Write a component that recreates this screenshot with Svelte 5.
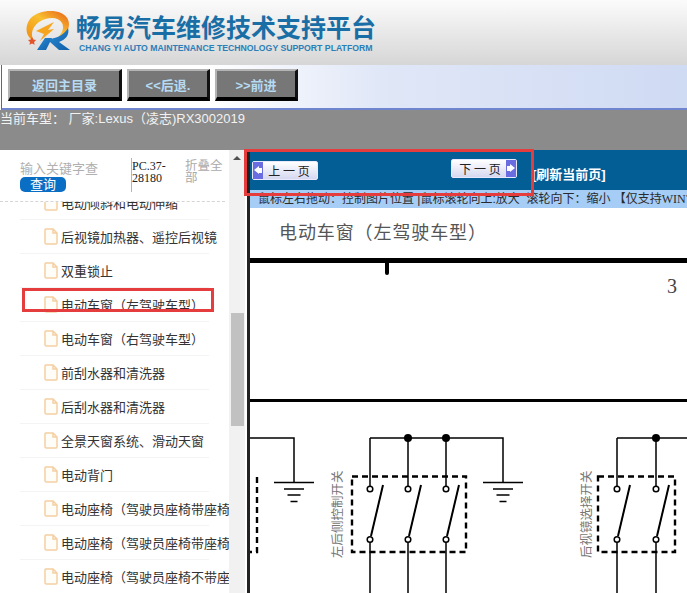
<script>
  const items = [
    '电动倾斜和电动伸缩', '后视镜加热器、遥控后视镜', '双重锁止', '电动车窗（左驾驶车型）',
    '电动车窗（右驾驶车型）', '前刮水器和清洗器', '后刮水器和清洗器', '全景天窗系统、滑动天窗',
    '电动背门', '电动座椅（驾驶员座椅带座椅记忆）', '电动座椅（驾驶员座椅带座椅加热）', '电动座椅（驾驶员座椅不带座椅记忆）'
  ];
  const groups = [
    { xs: [370, 408, 446], box: [352, 476.5, 114, 75.5], dots: [408, 446] },
    { xs: [617, 656], box: [598, 476.5, 77, 75.5], dots: [656] }
  ];
  const grounds = [294, 503];
  const labels = [
    { x: 342, y: 558, t: '左后侧控制开关' },
    { x: 591, y: 558, t: '后视镜选择开关' }
  ];
</script>

<div class="page">
  <header class="brand">
    <svg class="logo" viewBox="0 0 46 41" aria-hidden="true">
      <defs>
        <linearGradient id="sw" x1="0" y1="1" x2="1" y2="0">
          <stop offset="0" stop-color="#f08a10" />
          <stop offset="0.55" stop-color="#f9bf30" />
          <stop offset="1" stop-color="#e65f18" />
        </linearGradient>
        <linearGradient id="rr" x1="0" y1="0" x2="1" y2="1">
          <stop offset="0" stop-color="#2a8bd4" />
          <stop offset="1" stop-color="#0f5ea8" />
        </linearGradient>
      </defs>
      <path d="M9 31 C1 27 -1 17 5 9 C12 1 27 -1 36 3 C45 7 46 16 41 23 C38 27 35 29 30 30 C36 25 40 19 37 13 C33 6 22 7 14 12 C7 17 5 25 9 31Z" fill="url(#sw)" />
      <path d="M11 21 L29 12 L23 20 L29 19 L15 31 L19 24Z" fill="#f7a51f" />
      <path d="M7 27 l1.3 2.6 l2.8 .4 l-2 2 l.5 2.8 l-2.6 -1.3 l-2.5 1.3 l.5 -2.8 l-2 -2 l2.8 -.4Z" fill="#e2542a" />
      <path d="M12 40 L20 28 L27 28 L21 40Z" fill="url(#rr)" />
      <path d="M25 29 C32 28 39 25 43 18 C45 25 40 30 34 32 L45 40 L34 40 L25 32Z" fill="url(#rr)" />
    </svg>
    <div class="brand-text">
      <h1>畅易汽车维修技术支持平台</h1>
      <p>CHANG YI AUTO MAINTENANCE TECHNOLOGY SUPPORT PLATFORM</p>
    </div>
  </header>

  <nav class="toolbar">
    <button class="tool wide">返回主目录</button>
    <button class="tool">&lt;&lt;后退.</button>
    <button class="tool">&gt;&gt;前进</button>
  </nav>

  <div class="vehicle">当前车型： 厂家:Lexus（凌志)RX3002019</div>

  <main class="body">
    <aside class="side">
      <div class="search">
        <div class="kw">
          <span class="ph">输入关键字查</span>
          <span class="query">查询</span>
        </div>
        <div class="code">PC.37-<br />28180</div>
        <div class="fold">折叠全部</div>
      </div>
      <div class="listwrap">
        <ul>
          {#each items as item}
            <li>
              <svg class="doc" viewBox="0 0 14 17" aria-hidden="true">
                <path d="M1.5 1 H9 L13 5 V15 Q13 16 12 16 H2.5 Q1 16 1 15 V2 Q1 1 1.5 1Z M9 1 V5 H13" fill="#fffdf8" stroke="#f5cfa2" stroke-width="1.5" />
              </svg>
              <span>{item}</span>
            </li>
          {/each}
        </ul>
      </div>
    </aside>

    <div class="scroll">
      <span class="up"></span>
      <span class="thumb"></span>
    </div>

    <section class="viewer">
      <div class="bar">
        <button class="page-btn prev"><i class="arr left"></i>上 一 页</button>
        <button class="page-btn next">下 一 页<i class="arr right"></i></button>
        <span class="refresh">[刷新当前页]</span>
      </div>
      <div class="tip">鼠标左右拖动：控制图片位置 |鼠标滚轮向上:放大 &nbsp;滚轮向下：缩小 【仅支持<span class="win">WIN7以上系统】</span></div>
      <svg class="sheet" viewBox="250 208 437 385">
        <text class="title" x="279" y="239">电动车窗（左驾驶车型）</text>
        <rect x="250" y="258" width="437" height="5" fill="#000" />
        <path d="M387 262 V273" stroke="#000" stroke-width="4" stroke-linecap="round" />
        <text class="num" x="667" y="293">3</text>
        <rect x="250" y="399" width="437" height="3" fill="#000" />

        <g fill="none" stroke="#000" stroke-width="1.5">
          <path d="M250 438 H294 V482" />
          <path d="M370 438 H503 V482" />
          <path d="M617 438 H687" />
          <path d="M408 438 V486 M446 438 V486 M370 438 V486 M617 438 V486 M656 438 V486" />
          <path d="M370 542 V593 M408 542 V593 M446 542 V593 M617 542 V593 M656 542 V593" />
          {#each grounds as g}
            <path d="M{g - 20} 482.5 H{g + 20} M{g - 10} 489 H{g + 10} M{g - 6.5} 495 H{g + 6.5} M{g - 3.5} 501.5 H{g + 3.5}" stroke-width="1.6" />
          {/each}
          <path d="M257 477 V552 H250" stroke-width="2.4" stroke-dasharray="6 4" />
          {#each groups as gr}
            <rect x={gr.box[0]} y={gr.box[1]} width={gr.box[2]} height={gr.box[3]} stroke-width="2.4" stroke-dasharray="6 4" />
            {#each gr.xs as x}
              <path d="M{x + 13} 485 L{x + 1} 536" stroke-width="2" />
              <circle cx={x} cy="489" r="2.8" fill="#fff" />
              <circle cx={x} cy="539.5" r="2.8" fill="#fff" />
            {/each}
          {/each}
        </g>
        {#each groups as gr}
          {#each gr.dots as x}
            <circle cx={x} cy="438" r="4" fill="#000" />
          {/each}
        {/each}
        {#each labels as l}
          <text class="vert" transform="translate({l.x} {l.y}) rotate(-90)">{l.t}</text>
        {/each}
      </svg>
    </section>
  </main>

  <div class="mark mark-a"></div>
  <div class="mark mark-b"></div>
</div>

<style>
  :global(body) { margin: 0; }
  .page {
    position: relative;
    width: 687px;
    height: 593px;
    overflow: hidden;
    display: flex;
    flex-direction: column;
    background: #fff;
    font-family: "Liberation Sans", "Noto Sans CJK SC", sans-serif;
  }
  .brand {
    height: 65px;
    flex: none;
    box-sizing: border-box;
    display: flex;
    align-items: flex-start;
    padding: 10px 0 0 25px;
    gap: 5px;
    background: linear-gradient(#fbfbfb, #d6d6d6);
  }
  .logo { width: 46px; height: 41px; flex: none; }
  .brand-text { padding-top: 1px; }
  .brand h1 {
    margin: 0;
    font-size: 25px;
    line-height: 30px;
    font-weight: 700;
    color: #1a6ea6;
    white-space: nowrap;
    font-family: "Noto Sans CJK SC", sans-serif;
  }
  .brand p {
    margin: 1px 0 0 3px;
    font-size: 8.7px;
    line-height: 12px;
    font-weight: 700;
    color: #2a7fb8;
    white-space: nowrap;
  }
  .toolbar {
    height: 45px;
    flex: none;
    box-sizing: border-box;
    display: flex;
    gap: 5px;
    padding: 4px 0 0 6px;
    border-left: 1px solid #666;
    margin-left: 1px;
    border-bottom: 2px solid #6f86cf;
    background: linear-gradient(90deg, #fff 30%, #e0e7f7 55%, #cfdaf3);
  }
  .tool {
    width: 83px;
    height: 32px;
    margin: 0;
    padding: 0;
    box-sizing: border-box;
    background: #777;
    border-style: solid;
    border-width: 2px 3px 4px 2px;
    border-color: #b4b4b4 #111 #000 #b4b4b4;
    color: #b6daf2;
    font: 700 13px "Liberation Sans", "Noto Sans CJK SC", sans-serif;
  }
  .tool.wide { width: 114px; }
  .vehicle {
    height: 40px;
    flex: none;
    background: #8b8b8b;
    color: #f2f2f2;
    font-size: 13px;
    line-height: 17px;
    white-space: nowrap;
  }
  .body { flex: 1; min-height: 0; display: flex; }
  .side { width: 229px; flex: none; display: flex; flex-direction: column; background: #fff; }
  .search {
    height: 52px;
    flex: none;
    box-sizing: border-box;
    display: flex;
    padding: 8px 0 0 20px;
    border-bottom: 1px dashed #d5d5d5;
    margin-right: 4px;
  }
  .kw { width: 111px; flex: none; display: flex; flex-direction: column; align-items: flex-start; }
  .ph { margin-top: 3px; font-size: 13px; line-height: 16px; color: #b0b0b0; white-space: nowrap; }
  .query {
    width: 46px;
    height: 15px;
    border-radius: 5px;
    background: #0a6fc4;
    color: #fff;
    font-size: 13px;
    line-height: 15px;
    text-align: center;
  }
  .code {
    width: 54px;
    height: 34px;
    flex: none;
    box-sizing: border-box;
    border-left: 1px solid #b5b5b5;
    font: 12px/12px "Liberation Serif", serif;
    color: #222;
    padding-top: 2px;
  }
  .fold { width: 38px; flex: none; font-size: 12.5px; line-height: 12px; color: #aaa; padding-top: 2px; }
  .listwrap { flex: 1; min-height: 0; overflow: hidden; }
  ul { list-style: none; margin: -16px 0 0; padding: 0; }
  li {
    height: 34px;
    box-sizing: border-box;
    display: flex;
    align-items: center;
    gap: 3px;
    margin-left: 20px;
    padding-left: 24px;
    width: 189px;
    white-space: nowrap;
    border-bottom: 1px solid #f4f4f4;
    font-size: 13px;
    color: #333;
  }
  .doc { width: 14px; height: 17px; flex: none; }
  .scroll {
    position: relative;
    width: 16px;
    flex: none;
    background: #f1f1f1;
    display: flex;
    flex-direction: column;
    align-items: center;
  }
  .up {
    margin-top: 6px;
    width: 0;
    height: 0;
    border-left: 4px solid transparent;
    border-right: 4px solid transparent;
    border-bottom: 4px solid #505050;
  }
  .thumb { position: absolute; left: 2px; top: 163px; width: 13px; height: 113px; background: #c1c1c1; }
  .viewer {
    flex: 1;
    min-width: 0;
    display: flex;
    flex-direction: column;
    border-left: 3px solid #222;
    margin-left: 2px;
  }
  .bar {
    height: 40px;
    flex: none;
    box-sizing: border-box;
    display: flex;
    align-items: flex-start;
    padding: 9px 0 0 2px;
    background: #045e96;
  }
  .page-btn {
    height: 19px;
    width: 66px;
    margin: 0;
    padding: 0;
    position: relative;
    box-sizing: border-box;
    border: 1px solid #e8e8ff;
    border-radius: 2px;
    background: linear-gradient(#ffffff, #d5d8f0);
    color: #222;
    font: 12px/16px "Noto Sans CJK SC", sans-serif;
  }
  .prev { margin-top: 2px; padding-left: 8px; }
  .next { margin-left: 133px; padding-right: 8px; }
  .arr { position: absolute; top: 0; bottom: 0; width: 10px; background: #6a6de0; }
  .arr::before {
    content: "";
    position: absolute;
    top: 6px;
    width: 4px;
    height: 5px;
    background: #fff;
  }
  .arr::after {
    content: "";
    position: absolute;
    top: 4px;
    border-top: 4.5px solid transparent;
    border-bottom: 4.5px solid transparent;
  }
  .arr.left { left: 0; }
  .arr.right { right: 0; }
  .arr.left::before { left: 5px; }
  .arr.right::before { right: 5px; }
  .arr.left::after { left: 1px; border-right: 5px solid #fff; }
  .arr.right::after { right: 1px; border-left: 5px solid #fff; }
  .refresh {
    margin-left: 15px;
    margin-top: 8px;
    color: #fff;
    font-weight: 700;
    font-size: 13px;
    line-height: 16px;
    white-space: nowrap;
  }
  .tip {
    height: 18px;
    flex: none;
    box-sizing: border-box;
    padding-left: 8px;
    background: #a5cdf5;
    color: #2a2a2a;
    font-size: 12px;
    line-height: 19px;
    white-space: nowrap;
    overflow: hidden;
  }
  .win { font-family: "Liberation Serif", "Noto Sans CJK SC", serif; }
  .sheet { width: 437px; height: 385px; display: block; flex: none; }
  .title { font: 18px "Noto Sans CJK SC", serif; fill: #555; letter-spacing: .9px; }
  .num { font: 20px "Liberation Serif", serif; fill: #444; }
  .vert { font: 12.5px "Noto Sans CJK SC", serif; fill: #777; }
  .mark { position: absolute; box-sizing: border-box; border: 3px solid #e53d3d; pointer-events: none; }
  .mark-a { left: 244px; top: 149px; width: 290px; height: 47px; }
  .mark-b { left: 22px; top: 288px; width: 192px; height: 24px; }
</style>
